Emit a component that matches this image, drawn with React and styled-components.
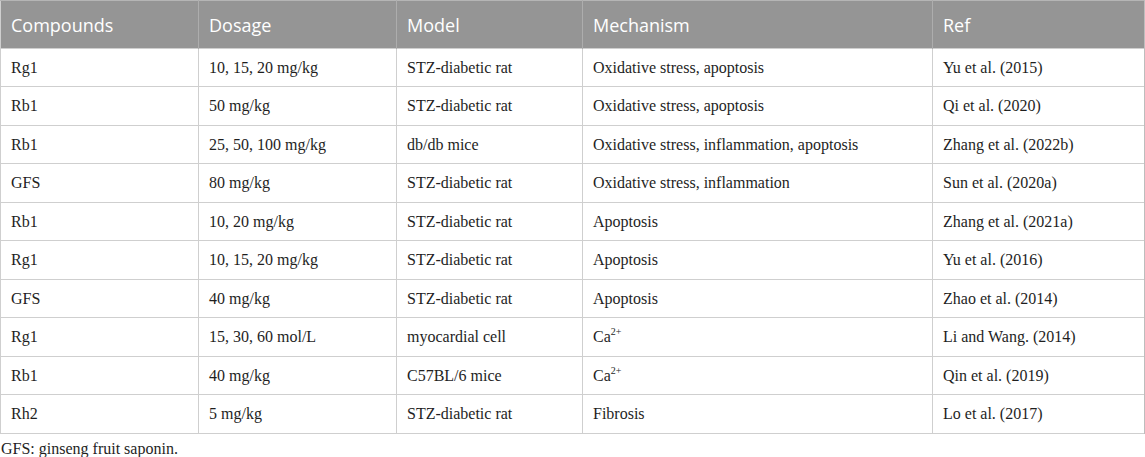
import React from 'react'
import styled, { createGlobalStyle } from 'styled-components'

const GlobalStyle = createGlobalStyle`
  html, body {
    margin: 0;
    padding: 0;
    background: #ffffff;
  }
`

const rows = [
  ['Rg1', '10, 15, 20 mg/kg', 'STZ-diabetic rat', 'Oxidative stress, apoptosis', 'Yu et al. (2015)'],
  ['Rb1', '50 mg/kg', 'STZ-diabetic rat', 'Oxidative stress, apoptosis', 'Qi et al. (2020)'],
  ['Rb1', '25, 50, 100 mg/kg', 'db/db mice', 'Oxidative stress, inflammation, apoptosis', 'Zhang et al. (2022b)'],
  ['GFS', '80 mg/kg', 'STZ-diabetic rat', 'Oxidative stress, inflammation', 'Sun et al. (2020a)'],
  ['Rb1', '10, 20 mg/kg', 'STZ-diabetic rat', 'Apoptosis', 'Zhang et al. (2021a)'],
  ['Rg1', '10, 15, 20 mg/kg', 'STZ-diabetic rat', 'Apoptosis', 'Yu et al. (2016)'],
  ['GFS', '40 mg/kg', 'STZ-diabetic rat', 'Apoptosis', 'Zhao et al. (2014)'],
  ['Rg1', '15, 30, 60 mol/L', 'myocardial cell', 'ca', 'Li and Wang. (2014)'],
  ['Rb1', '40 mg/kg', 'C57BL/6 mice', 'ca', 'Qin et al. (2019)'],
  ['Rh2', '5 mg/kg', 'STZ-diabetic rat', 'Fibrosis', 'Lo et al. (2017)'],
]

const widths = [198, 198, 186, 350, 212]

const Wrapper = styled.div`
  width: 1144px;
`

const Table = styled.table`
  width: 1144px;
  border-collapse: collapse;
  table-layout: fixed;
  border-left: 1px solid #cfcfcf;
  border-right: 2px solid #bdbdbd;
`

const HeadCell = styled.th`
  height: 47px;
  padding: 0 10px;
  background: #959595;
  border-top: 1px solid #b5b5b5;
  border-right: 1px solid #adadad;
  color: #ffffff;
  font-family: 'Open Sans', 'Noto Sans', sans-serif;
  font-size: 18px;
  font-weight: 400;
  text-align: left;
  vertical-align: middle;
  &:last-child {
    border-right: none;
  }
`

const Cell = styled.td`
  height: ${p => p.$h}px;
  padding: 0 10px;
  border-top: 1px solid #cfcfcf;
  border-bottom: 1px solid #cfcfcf;
  border-right: 1px solid #cfcfcf;
  color: #1e1e1e;
  font-family: 'Liberation Serif', 'Times New Roman', serif;
  font-size: 16px;
  vertical-align: middle;
  white-space: nowrap;
  &:last-child {
    border-right: none;
  }
`

const Sup = styled.sup`
  font-size: 10px;
  vertical-align: 7px;
  line-height: 0;
`

const Note = styled.p`
  margin: 0;
  padding: 6px 0 0 1px;
  color: #1e1e1e;
  font-family: 'Liberation Serif', 'Times New Roman', serif;
  font-size: 16px;
`

const renderText = text =>
  text === 'ca' ? (
    <>
      Ca<Sup>2+</Sup>
    </>
  ) : (
    text
  )

export default function App() {
  return (
    <Wrapper>
      <GlobalStyle />
      <Table>
        <colgroup>
          {widths.map((w, i) => (
            <col key={i} style={{ width: w }} />
          ))}
        </colgroup>
        <thead>
          <tr>
            {['Compounds', 'Dosage', 'Model', 'Mechanism', 'Ref'].map(h => (
              <HeadCell key={h}>{h}</HeadCell>
            ))}
          </tr>
        </thead>
        <tbody>
          {rows.map((row, i) => (
            <tr key={i}>
              {row.map((c, j) => (
                <Cell key={j} $h={i % 2 === 0 ? 37 : 38}>
                  {renderText(c)}
                </Cell>
              ))}
            </tr>
          ))}
        </tbody>
      </Table>
      <Note>GFS: ginseng fruit saponin.</Note>
    </Wrapper>
  )
}
